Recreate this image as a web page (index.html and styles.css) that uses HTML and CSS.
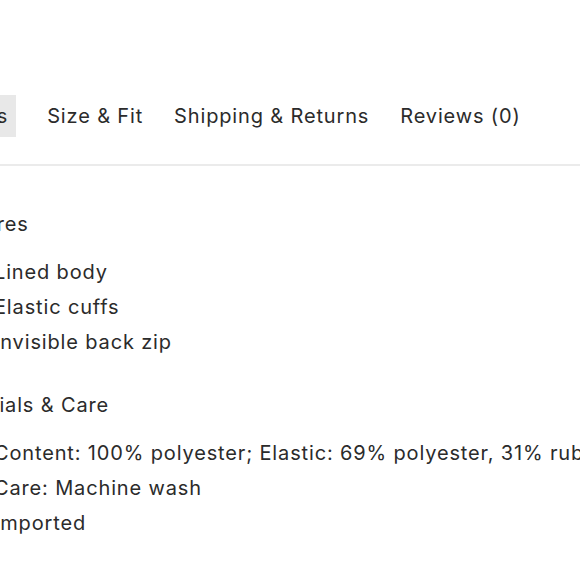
FILE: index.html
```html
<!DOCTYPE html>
<html lang="en">
<head>
<meta charset="utf-8">
<title>Product details</title>
<link rel="stylesheet" href="styles.css">
</head>
<body>
<div class="page">
  <nav class="tabs">
    <span class="tab active">Details</span>
    <span class="tab">Size &amp; Fit</span>
    <span class="tab">Shipping &amp; Returns</span>
    <span class="tab">Reviews (0)</span>
  </nav>
  <section class="panel">
    <h3 class="heading">Features</h3>
    <ul class="list">
      <li>Lined body</li>
      <li>Elastic cuffs</li>
      <li>Invisible back zip</li>
    </ul>
    <h3 class="heading">Materials &amp; Care</h3>
    <ul class="list">
      <li>Content: 100% polyester; Elastic: 69% polyester, 31% rubber</li>
      <li>Care: Machine wash</li>
      <li>Imported</li>
    </ul>
  </section>
</div>
</body>
</html>
```

FILE: styles.css
```css
html, body {
  margin: 0;
  padding: 0;
  overflow: hidden;
  background: #fff;
}
body {
  font-family: Inter, "Liberation Sans", sans-serif;
  color: #2b2b2b;
  font-size: 20px;
  letter-spacing: 0.85px;
}
.page {
  margin-left: -120px;
  width: 900px;
  padding-top: 95px;
}
.tabs {
  display: flex;
  gap: 15px;
  padding-left: 50px;
  padding-bottom: 27px;
  border-bottom: 2px solid #ebebeb;
}
.tab {
  display: block;
  padding: 8px 8px;
  line-height: 26px;
  white-space: nowrap;
}
.tab.active {
  background: #e8e8e8;
  margin-right: 8px;
}
.panel {
  padding: 41px 0 0 60px;
}
.heading {
  margin: 0 0 13px;
  font-size: 20px;
  font-weight: 400;
  line-height: 35px;
}
.list {
  list-style: none;
  margin: 0 0 28px;
  padding: 0 0 0 54px;
  line-height: 35px;
  white-space: nowrap;
}
```
